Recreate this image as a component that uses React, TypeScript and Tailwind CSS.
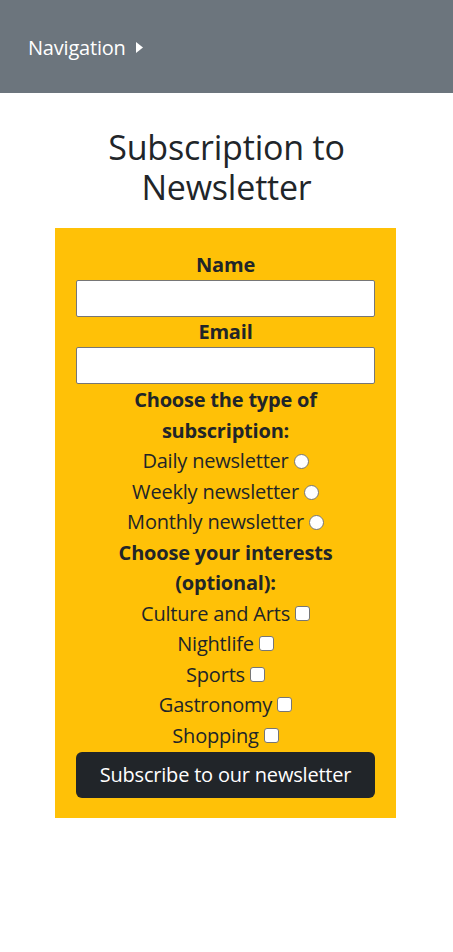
import React from "react";

const font = { fontFamily: '"Open Sans", "Noto Sans", sans-serif' };

function Radio({ label }: { label: string }) {
  return (
    <div className="leading-[30.5px]">
      <label>
        {label}{" "}
        <span className="inline-block w-[15px] h-[15px] align-[-1px] rounded-full bg-white border border-[#767676]" />
      </label>
    </div>
  );
}

function Check({ label }: { label: string }) {
  return (
    <div className="leading-[30.5px]">
      <label>
        {label}{" "}
        <span className="inline-block w-[15px] h-[15px] align-[0px] rounded-[3px] bg-white border border-[#767676]" />
      </label>
    </div>
  );
}

export default function App() {
  return (
    <div className="min-h-[952px] bg-white text-[#212529] tracking-[-0.2px]" style={font}>
      <header className="h-[93px] bg-[#6c757d] flex items-center pl-[28px] pt-[2px]">
        <span className="text-white text-[20px] flex items-center gap-[10px]">
          Navigation
          <svg width="7" height="11" viewBox="0 0 7 11"><path d="M0 0 L7 5.5 L0 11 Z" fill="white" /></svg>
        </span>
      </header>
      <h1 className="text-center text-[34px] leading-[40px] mt-[34px] mb-[21px] font-normal">
        Subscription to
        <br />
        Newsletter
      </h1>
      <form className="ml-[55px] mr-[57px] bg-[#ffc107] pt-[22px] px-[21px] pb-[20px] text-center text-[20px]">
        <div className="font-bold leading-[30px]">Name</div>
        <input type="text" className="block w-full h-[37px] bg-white border border-[#767676] rounded-[2px]" />
        <div className="font-bold leading-[30px]">Email</div>
        <input type="email" className="block w-full h-[37px] bg-white border border-[#767676] rounded-[2px]" />
        <div className="font-bold leading-[30.5px] mt-[1px]">Choose the type of<br />subscription:</div>
        <Radio label="Daily newsletter" />
        <Radio label="Weekly newsletter" />
        <Radio label="Monthly newsletter" />
        <div className="font-bold leading-[30.5px]">Choose your interests<br />(optional):</div>
        <Check label="Culture and Arts" />
        <Check label="Nightlife" />
        <Check label="Sports" />
        <Check label="Gastronomy" />
        <Check label="Shopping" />
        <button type="button" className="block w-full h-[46px] mt-[1px] bg-[#212529] text-white text-[20px] rounded-[6px]">
          Subscribe to our newsletter
        </button>
      </form>
    </div>
  );
}
